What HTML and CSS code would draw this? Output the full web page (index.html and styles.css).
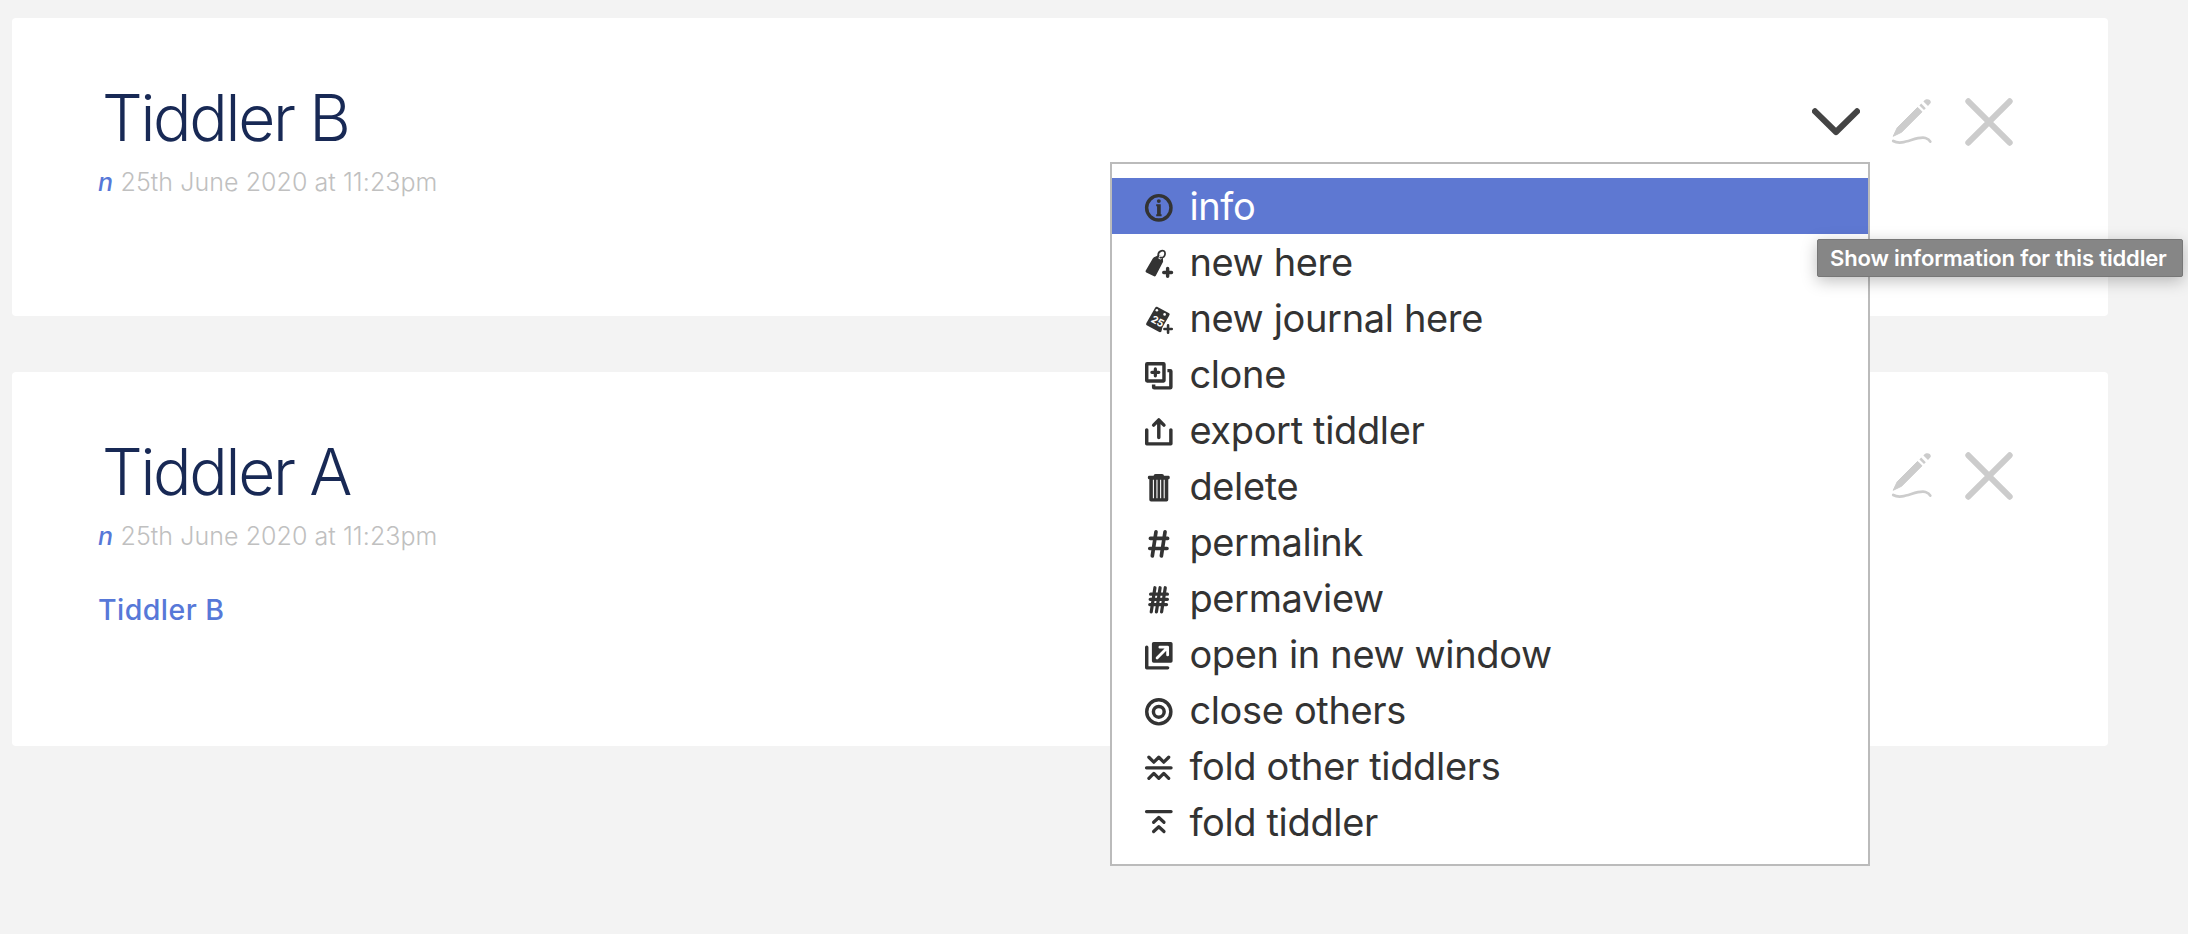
FILE: index.html
```
<!DOCTYPE html>
<html lang="en">
<head>
<meta charset="utf-8">
<title>Tiddlers</title>
<link rel="stylesheet" href="styles.css">
</head>
<body>
<svg class="defs" aria-hidden="true">
  <symbol id="pencil" viewBox="0 0 48 48">
    <path d="M5.2 38.300 9.200 29.800 29.600 9.400 34 13.800 13.600 34.200Z" fill="currentColor" stroke="currentColor" stroke-width="1" stroke-linejoin="round"/>
    <path d="M31.400 7.400 33.200 5.600 37.800 10.200 36 12ZM35.400 3.400C38 -.6 44 1.500 42.600 5L40 8Z" fill="currentColor"/>
    <path d="M5.200 43C15 48.500 28 37.500 37.500 40Q41 41 42.300 43.700" fill="none" stroke="currentColor" stroke-width="2.700" stroke-linecap="round"/>
  </symbol>
  <symbol id="cross" viewBox="0 0 48 48">
    <path d="M3.300 3.300 44.700 44.700M44.700 3.300 3.300 44.700" fill="none" stroke="currentColor" stroke-width="6" stroke-linecap="round"/>
  </symbol>
</svg>
<main class="river">
  <article class="card card-b">
    <header class="head">
      <h2 class="title">Tiddler B</h2>
      <div class="tools">
        <svg class="tool active" viewBox="0 0 48 48"><path d="M3 13.300 24 34 45 13.300" fill="none" stroke="currentColor" stroke-width="6" stroke-linecap="round" stroke-linejoin="round"/></svg>
        <svg class="tool"><use href="#pencil"/></svg>
        <svg class="tool"><use href="#cross"/></svg>
      </div>
    </header>
    <p class="subtitle"><em class="author">n</em><span class="date">25th June 2020 at 11:23pm</span></p>
  </article>
  <article class="card card-a">
    <header class="head">
      <h2 class="title">Tiddler A</h2>
      <div class="tools">
        <svg class="tool"><use href="#pencil"/></svg>
        <svg class="tool"><use href="#cross"/></svg>
      </div>
    </header>
    <p class="subtitle"><em class="author">n</em><span class="date">25th June 2020 at 11:23pm</span></p>
    <p class="body"><a class="link">Tiddler B</a></p>
  </article>
</main>
<nav class="menu">
  <a class="item selected"><svg class="icon" viewBox="0 0 128 128"><circle cx="64" cy="64" r="56.500" class="line w16"/><circle cx="64" cy="33" r="9"/><path d="M52 48h21v46h4v9H52v-9h4V57h-4z"/></svg><span>info</span></a>
  <a class="item"><svg class="icon" viewBox="0 0 128 128"><path d="M50 30 63 23Q77 24 83 36L84 54 50 119Q47 124 42 122L6 104Q1 101 3 96L36 40Q40 33 50 30Z"/><circle cx="71" cy="34" r="10" fill="#fff"/><path d="M62 32C56 0 94-6 93 16C93 30 84 38 71 35" class="line w8"/><path d="M105 86v36M87 104h36" class="line w16"/></svg><span>new here</span></a>
  <a class="item"><svg class="icon" viewBox="0 0 128 128"><path d="M56 4 112 34Q116 37 114 41L110 49 81 99 76 118Q73 123 66 121L8 89Q3 86 6 80L47 8Q51 2 56 4Z"/><circle cx="55" cy="20" r="6" fill="#fff"/><circle cx="91" cy="39" r="6" fill="#fff"/><text x="59" y="88" class="day" transform="rotate(28 59 70)">25</text><path d="M107 90v34M90 107h34" class="line w12"/></svg><span>new journal here</span></a>
  <a class="item"><svg class="icon" viewBox="0 0 128 128"><rect x="8" y="8" width="80" height="80" rx="2" class="line w16"/><path d="M48 32v32M32 48h32" class="line w15"/><path d="M104 40h13q3 0 3 3v74q0 3-3 3H43q-3 0-3-3v-13" class="line w16 butt"/></svg><span>clone</span></a>
  <a class="item"><svg class="icon" viewBox="0 0 128 128"><path d="M8 55v65h112V55M64 90V10M40 33 64 9 88 33" class="line w16"/></svg><span>export tiddler</span></a>
  <a class="item"><svg class="icon" viewBox="0 0 128 128"><path d="M40 8Q40 0 49 0h30q9 0 9 8h22q5 0 5 8t-5 8h-2v96q0 8-8 8H28q-8 0-8-8V24h-2q-5 0-5-8t5-8z"/><path d="M39 27v86M55.500 27v86M72.500 27v86M89 27v86" class="slit"/></svg><span>delete</span></a>
  <a class="item"><svg class="icon" viewBox="0 0 128 128"><path d="M51 8 34 120M93 8 76 120M25 39h80M22 86h80" class="line w17"/></svg><span>permalink</span></a>
  <a class="item"><svg class="icon" viewBox="0 0 128 128"><path d="M46 8 29 120M70 8 53 120M94 8 77 120M26 38h78M24 62h80M22 86h78" class="line w15"/></svg><span>permaview</span></a>
  <a class="item"><svg class="icon" viewBox="0 0 128 128"><rect x="32" width="96" height="96" rx="8"/><path d="M8 24v96h97" class="line w16"/><path d="M56 74 101 29M69 24h36v36" class="arrow"/></svg><span>open in new window</span></a>
  <a class="item"><svg class="icon" viewBox="0 0 128 128"><circle cx="64" cy="64" r="56" class="line w16"/><circle cx="64" cy="64" r="25" class="line w16"/></svg><span>close others</span></a>
  <a class="item"><svg class="icon" viewBox="0 0 128 128"><path d="M7 64h114M18 15 41 38 64 15 87 38 110 15M18 113 41 90 64 113 87 90 110 113" class="line w15"/></svg><span>fold other tiddlers</span></a>
  <a class="item"><svg class="icon" viewBox="0 0 128 128"><path d="M7 7.500h114M40 57 64 35 88 57M40 100 64 78 88 100" class="line w15"/></svg><span>fold tiddler</span></a>
</nav>
<div class="tooltip">Show information for this tiddler</div>
</body>
</html>
```
FILE: styles.css
```
* { box-sizing: border-box; }
body {
  margin: 0;
  height: 934px;
  position: relative;
  overflow: hidden;
  background: #f3f3f3;
  font-family: Inter, "Liberation Sans", sans-serif;
  color: #333;
}
h2, p { margin: 0; }
.defs { position: absolute; width: 0; height: 0; }
.river {
  display: flex;
  flex-direction: column;
  gap: 56px;
  padding: 18px 80px 0 12px;
}
.card {
  background: #fff;
  border-radius: 4px;
  padding: 60px 95.500px 0 86px;
}
.card-b { height: 298px; }
.card-a { height: 374px; }
.head {
  display: flex;
  justify-content: space-between;
  height: 78px;
}
.title {
  padding: 1px 0 0 4px;
  font-size: 64px;
  line-height: 78px;
  font-weight: 300;
  letter-spacing: -2.300px;
  color: #182955;
}
.tools {
  display: flex;
  gap: 28.200px;
  padding-top: 20px;
  color: #ccc;
}
.tool { width: 48px; height: 48px; }
.tool.active { color: #444; }
.subtitle {
  display: flex;
  gap: 7.500px;
  height: 50px;
  padding-top: 1px;
  font-size: 25px;
  line-height: 50px;
}
.author { color: #5778d8; font-weight: 500; }
.date { color: #c0c0c0; font-weight: 300; letter-spacing: 0.060px; }
.body { padding-top: 30px; font-size: 28.500px; line-height: 40px; }
.link { color: #5778d8; font-weight: 500; letter-spacing: 0.450px; }
.menu {
  position: absolute;
  left: 1110px;
  top: 162px;
  width: 760px;
  height: 704px;
  padding: 14px 0;
  background: #fff;
  border: 2px solid #bbb;
}
.item {
  display: flex;
  align-items: center;
  gap: 16.800px;
  height: 56px;
  padding-left: 33px;
  font-size: 38px;
  line-height: 56px;
  letter-spacing: -0.350px;
  white-space: nowrap;
}
.item.selected { background: #5e78d2; color: #fff; }
.icon {
  width: 27.600px;
  height: 27.600px;
  margin-top: 3px;
  fill: #333;
  overflow: visible;
}
.line { fill: none; stroke: #333; stroke-linecap: round; stroke-linejoin: round; }
.butt { stroke-linecap: butt; }
.w8 { stroke-width: 8; }
.w12 { stroke-width: 12; }
.w15 { stroke-width: 15; }
.w16 { stroke-width: 16; }
.w17 { stroke-width: 17; }
.slit { stroke: #fff; stroke-width: 5; }
.arrow { fill: none; stroke: #fff; stroke-width: 13; stroke-linecap: round; stroke-linejoin: round; }
.day { fill: #fff; font-size: 48px; font-weight: 700; text-anchor: middle; }
.tooltip {
  position: absolute;
  left: 1817px;
  top: 239px;
  width: 366px;
  height: 38px;
  padding-left: 12px;
  background: #868686;
  border: 1px solid #777;
  border-radius: 2px;
  box-shadow: 0 4px 16px rgba(0, 0, 0, .25);
  color: #fff;
  font-size: 22px;
  font-weight: 600;
  letter-spacing: -0.150px;
  line-height: 36px;
  white-space: nowrap;
}
```
